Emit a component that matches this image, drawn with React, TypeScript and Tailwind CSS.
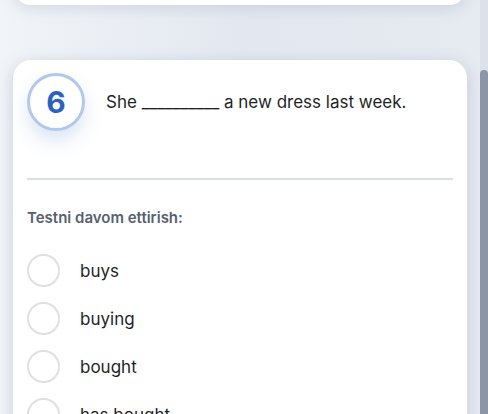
const options = ["buys", "buying", "bought", "has bought"];

export default function App() {
  return (
    <div
      className="flex h-[414px] w-[488px] overflow-hidden bg-gradient-to-r from-[#f1f4f8] via-[#e3e8f0] to-[#e6eaf1]"
      style={{ fontFamily: "Inter, 'Noto Sans', sans-serif" }}
    >
      <div className="flex min-w-0 flex-1 flex-col px-[13px]">
        <div className="-mt-[40px] h-[45px] shrink-0 rounded-[18px] bg-white shadow-[0_4px_14px_rgba(100,116,139,0.18)]" />

        <div className="mt-[55px] shrink-0 rounded-[18px] bg-white px-[14px] pb-24 pt-[13px] shadow-[0_4px_16px_rgba(100,116,139,0.28)]">
          <div className="flex items-center gap-[21px]">
            <div className="flex h-[58px] w-[58px] shrink-0 items-center justify-center rounded-full border-[3px] border-[#b0c8ec] bg-white shadow-[0_10px_18px_rgba(120,150,210,0.25)]">
              <span className="text-[30px] font-bold leading-none text-[#2c62bf]">6</span>
            </div>
            <p className="text-[17px] leading-6 text-[#1f1f1f]">She __________ a new dress last week.</p>
          </div>

          <div className="mt-[47px] h-[2px] bg-[#d6dfeb]" />

          <p className="mt-[28px] text-[15px] font-semibold leading-5 text-[#566171]">Testni davom ettirish:</p>

          <ul className="mt-[26px] flex flex-col gap-[15px]">
            {options.map((option) => (
              <li key={option} className="flex items-center gap-5">
                <span className="h-[33px] w-[33px] shrink-0 rounded-full border-2 border-[#e0e0e0] bg-white" />
                <span className="text-[17px] leading-6 text-[#1f1f1f]">{option}</span>
              </li>
            ))}
          </ul>
        </div>
      </div>

      <div className="relative w-[8px] shrink-0 bg-[#dde2ea]">
        <div className="absolute inset-x-0 top-[70px] bottom-0 rounded-t-full bg-[#8b95a5]" />
      </div>
    </div>
  );
}
